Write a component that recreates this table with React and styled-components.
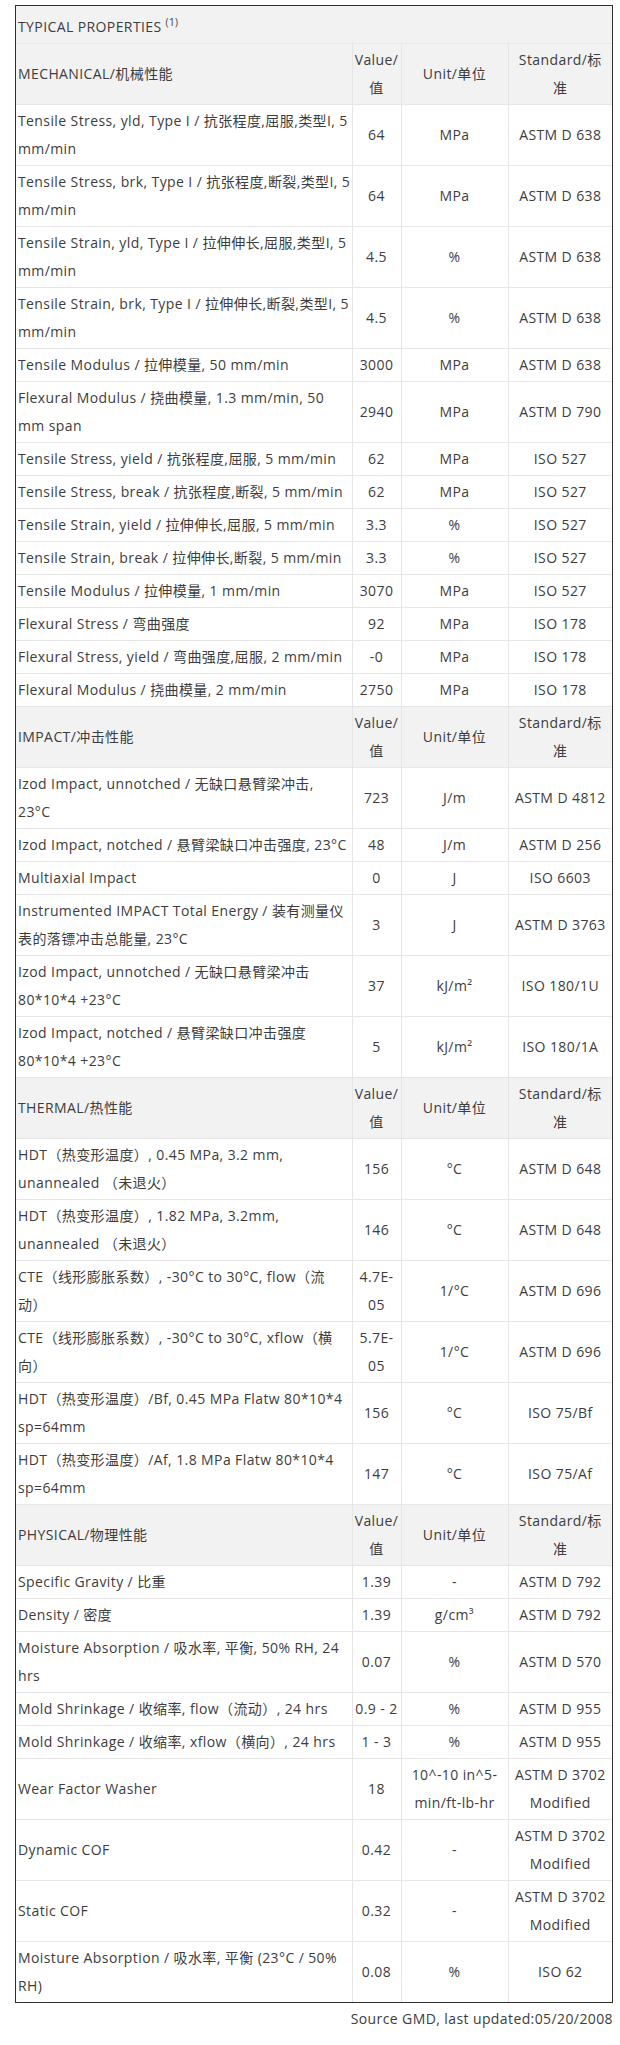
import React from "react";
import styled, { createGlobalStyle } from "styled-components";

const Global = createGlobalStyle`
  html, body { margin: 0; padding: 0; background: #fff; }
  body {
    font-family: "Open Sans", "Noto Sans CJK SC", sans-serif;
    font-size: 14px;
    letter-spacing: 0.4px;
    color: #3d3d3d;
  }
`;

const Page = styled.div`
  padding: 5px 7px 20px 15px;
`;

const Frame = styled.div`
  width: 596px;
  border: 1px solid #2f2f2f;
`;

const Table = styled.table`
  width: 596px;
  border-collapse: collapse;
  table-layout: fixed;
  tr:first-child > td { border-top: none; }
  tr:last-child > td { border-bottom: none; }
  td:first-child { border-left: none; }
  td:last-child { border-right: none; }
`;

const Cell = styled.td`
  border: 1px solid #e6e6e6;
  padding: 2px 2px;
  line-height: 28px;
  vertical-align: middle;
  white-space: nowrap;
  text-align: ${(p) => (p.$left ? "left" : "center")};
  background: ${(p) => (p.$head ? "#f2f2f2" : "#fff")};
`;

const TitleCell = styled.td`
  border: 1px solid #e6e6e6;
  padding: 7px 2px 2px;
  line-height: 28px;
  background: #f2f2f2;
  text-align: left;
`;

const Sup = styled.sup`
  font-size: 10px;
  line-height: 0;
`;

const Source = styled.div`
  width: 598px;
  text-align: right;
  line-height: 28px;
  margin-top: 2px;
`;

const ML = ({ lines }) =>
  lines.map((l, i) => (
    <React.Fragment key={i}>
      {i > 0 && <br />}
      {l}
    </React.Fragment>
  ));

const sections = [
  {
    name: "MECHANICAL/机械性能",
    rows: [
      [["Tensile Stress, yld, Type I / 抗张程度,屈服,类型I, 5", "mm/min"], "64", "MPa", "ASTM D 638"],
      [["Tensile Stress, brk, Type I / 抗张程度,断裂,类型I, 5", "mm/min"], "64", "MPa", "ASTM D 638"],
      [["Tensile Strain, yld, Type I / 拉伸伸长,屈服,类型I, 5", "mm/min"], "4.5", "%", "ASTM D 638"],
      [["Tensile Strain, brk, Type I / 拉伸伸长,断裂,类型I, 5", "mm/min"], "4.5", "%", "ASTM D 638"],
      ["Tensile Modulus / 拉伸模量, 50 mm/min", "3000", "MPa", "ASTM D 638"],
      [["Flexural Modulus / 挠曲模量, 1.3 mm/min, 50", "mm span"], "2940", "MPa", "ASTM D 790"],
      ["Tensile Stress, yield / 抗张程度,屈服, 5 mm/min", "62", "MPa", "ISO 527"],
      ["Tensile Stress, break / 抗张程度,断裂, 5 mm/min", "62", "MPa", "ISO 527"],
      ["Tensile Strain, yield / 拉伸伸长,屈服, 5 mm/min", "3.3", "%", "ISO 527"],
      ["Tensile Strain, break / 拉伸伸长,断裂, 5 mm/min", "3.3", "%", "ISO 527"],
      ["Tensile Modulus / 拉伸模量, 1 mm/min", "3070", "MPa", "ISO 527"],
      ["Flexural Stress / 弯曲强度", "92", "MPa", "ISO 178"],
      ["Flexural Stress, yield / 弯曲强度,屈服, 2 mm/min", "-0", "MPa", "ISO 178"],
      ["Flexural Modulus / 挠曲模量, 2 mm/min", "2750", "MPa", "ISO 178"],
    ],
  },
  {
    name: "IMPACT/冲击性能",
    rows: [
      [["Izod Impact, unnotched / 无缺口悬臂梁冲击,", "23°C"], "723", "J/m", "ASTM D 4812"],
      ["Izod Impact, notched / 悬臂梁缺口冲击强度, 23°C", "48", "J/m", "ASTM D 256"],
      ["Multiaxial Impact", "0", "J", "ISO 6603"],
      [["Instrumented IMPACT Total Energy / 装有测量仪", "表的落镖冲击总能量, 23°C"], "3", "J", "ASTM D 3763"],
      [["Izod Impact, unnotched / 无缺口悬臂梁冲击", "80*10*4 +23°C"], "37", "kJ/m²", "ISO 180/1U"],
      [["Izod Impact, notched / 悬臂梁缺口冲击强度", "80*10*4 +23°C"], "5", "kJ/m²", "ISO 180/1A"],
    ],
  },
  {
    name: "THERMAL/热性能",
    rows: [
      [["HDT（热变形温度）, 0.45 MPa, 3.2 mm,", "unannealed （未退火）"], "156", "°C", "ASTM D 648"],
      [["HDT（热变形温度）, 1.82 MPa, 3.2mm,", "unannealed （未退火）"], "146", "°C", "ASTM D 648"],
      [["CTE（线形膨胀系数）, -30°C to 30°C, flow（流", "动）"], ["4.7E-", "05"], "1/°C", "ASTM D 696"],
      [["CTE（线形膨胀系数）, -30°C to 30°C, xflow（横", "向）"], ["5.7E-", "05"], "1/°C", "ASTM D 696"],
      [["HDT（热变形温度）/Bf, 0.45 MPa Flatw 80*10*4", "sp=64mm"], "156", "°C", "ISO 75/Bf"],
      [["HDT（热变形温度）/Af, 1.8 MPa Flatw 80*10*4", "sp=64mm"], "147", "°C", "ISO 75/Af"],
    ],
  },
  {
    name: "PHYSICAL/物理性能",
    rows: [
      ["Specific Gravity / 比重", "1.39", "-", "ASTM D 792"],
      ["Density / 密度", "1.39", "g/cm³", "ASTM D 792"],
      [["Moisture Absorption / 吸水率, 平衡, 50% RH, 24", "hrs"], "0.07", "%", "ASTM D 570"],
      ["Mold Shrinkage / 收缩率, flow（流动）, 24 hrs", "0.9 - 2", "%", "ASTM D 955"],
      ["Mold Shrinkage / 收缩率, xflow（横向）, 24 hrs", "1 - 3", "%", "ASTM D 955"],
      ["Wear Factor Washer", "18", ["10^-10 in^5-", "min/ft-lb-hr"], ["ASTM D 3702", "Modified"]],
      ["Dynamic COF", "0.42", "-", ["ASTM D 3702", "Modified"]],
      ["Static COF", "0.32", "-", ["ASTM D 3702", "Modified"]],
      [["Moisture Absorption / 吸水率, 平衡 (23°C / 50%", "RH)"], "0.08", "%", "ISO 62"],
    ],
  },
];

const show = (v) => (Array.isArray(v) ? <ML lines={v} /> : v);

export default function App() {
  return (
    <Page>
      <Global />
      <Frame>
        <Table>
          <colgroup>
            <col style={{ width: 336 }} />
            <col style={{ width: 49 }} />
            <col style={{ width: 107 }} />
            <col style={{ width: 104 }} />
          </colgroup>
          <tbody>
            <tr>
              <TitleCell colSpan={4}>
                TYPICAL PROPERTIES <Sup>(1)</Sup>
              </TitleCell>
            </tr>
            {sections.map((s) => (
              <React.Fragment key={s.name}>
                <tr>
                  <Cell $head $left>{s.name}</Cell>
                  <Cell $head><ML lines={["Value/", "值"]} /></Cell>
                  <Cell $head>Unit/单位</Cell>
                  <Cell $head><ML lines={["Standard/标", "准"]} /></Cell>
                </tr>
                {s.rows.map((r, i) => (
                  <tr key={i}>
                    <Cell $left>{show(r[0])}</Cell>
                    <Cell>{show(r[1])}</Cell>
                    <Cell>{show(r[2])}</Cell>
                    <Cell>{show(r[3])}</Cell>
                  </tr>
                ))}
              </React.Fragment>
            ))}
          </tbody>
        </Table>
      </Frame>
      <Source>Source GMD, last updated:05/20/2008</Source>
    </Page>
  );
}
